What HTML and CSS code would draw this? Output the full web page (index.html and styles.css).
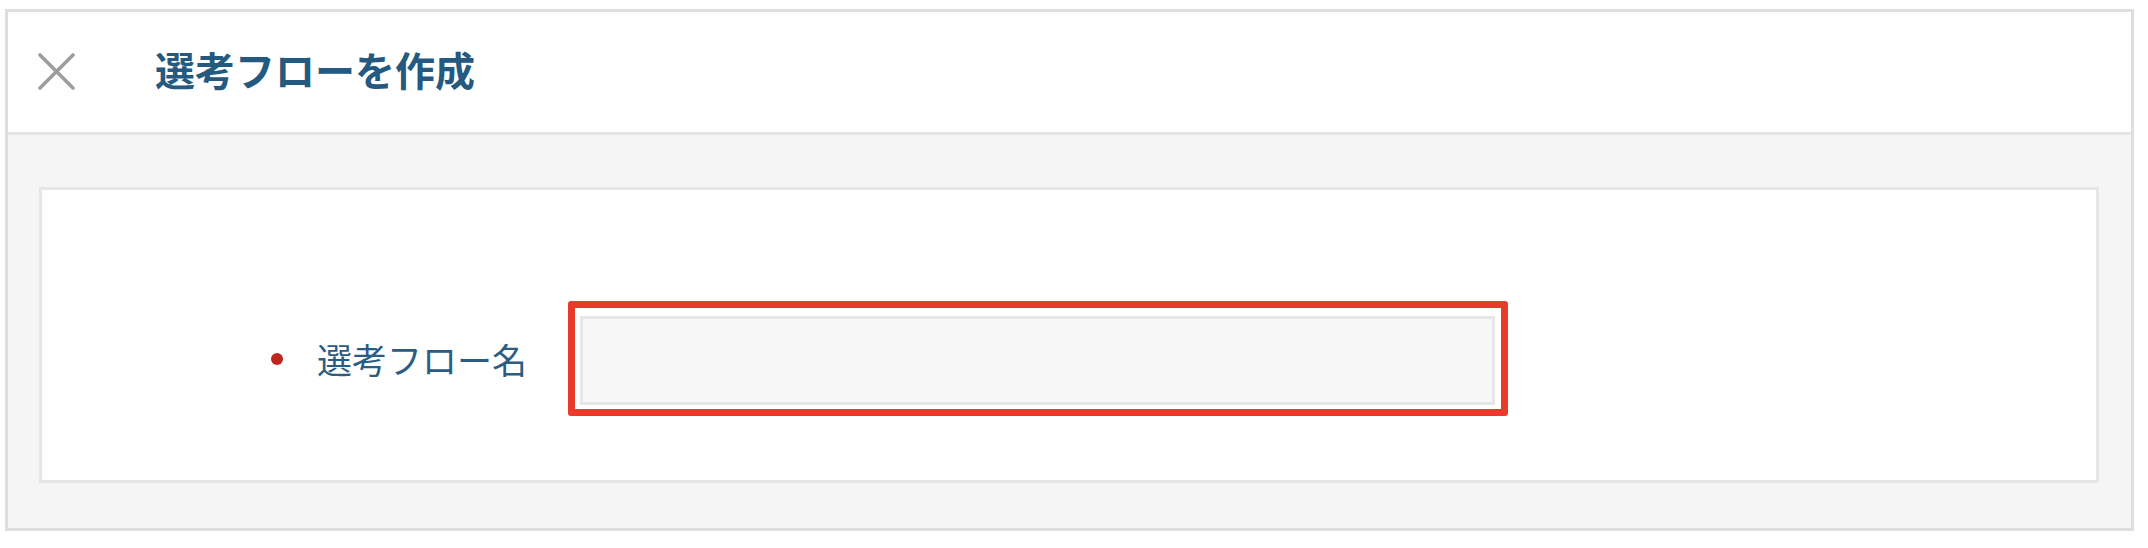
FILE: index.html
```html
<!DOCTYPE html>
<html lang="ja">
<head>
<meta charset="utf-8">
<title>選考フローを作成</title>
<link rel="stylesheet" href="styles.css">
</head>
<body>
<div class="modal">
  <div class="modal-header">
    <button class="close-btn" type="button" aria-label="閉じる">
      <svg width="37" height="37" viewBox="0 0 37 37"><path d="M2 2 L35 35 M35 2 L2 35" stroke="#9d9d9d" stroke-width="3.6" stroke-linecap="round" fill="none"/></svg>
    </button>
    <h1 class="modal-title">選考フローを作成</h1>
  </div>
  <div class="modal-body">
    <div class="form-card">
      <div class="form-row">
        <span class="required-dot"></span>
        <label class="form-label" for="flow-name">選考フロー名</label>
        <div class="highlight">
          <input class="text-input" id="flow-name" type="text">
        </div>
      </div>
    </div>
  </div>
</div>
</body>
</html>
```
FILE: styles.css
```css
html, body {
  margin: 0;
  padding: 0;
  background: #ffffff;
}
body {
  font-family: "Noto Sans CJK JP", "Noto Sans", sans-serif;
}
.modal {
  margin: 9px 14px 0 5px;
  border: 3px solid #dedede;
}
.modal-header {
  height: 123px;
  box-sizing: border-box;
  padding: 0 0 6px 30px;
  display: flex;
  align-items: center;
  background: #ffffff;
  border-bottom: 3px solid #e5e5e5;
}
.close-btn {
  width: 37px;
  height: 37px;
  padding: 0;
  margin: 4px 80px 0 0;
  border: 0;
  background: none;
  display: flex;
}
.modal-title {
  margin: 0;
  font-size: 40px;
  line-height: 1;
  font-weight: 700;
  color: #245a80;
}
.modal-body {
  background: #f5f5f5;
  padding: 52px 32px 45px 31px;
}
.form-card {
  background: #ffffff;
  border: 3px solid #e6e6e6;
  box-sizing: border-box;
  height: 296px;
  padding: 111px 0 0 229px;
}
.form-row {
  display: flex;
  align-items: center;
}
.required-dot {
  width: 12px;
  height: 12px;
  border-radius: 50%;
  background: #c0251d;
  margin-right: 34px;
  flex: none;
}
.form-label {
  font-size: 35px;
  line-height: 1;
  color: #2c5c83;
  margin-right: 41px;
}
.highlight {
  border: 7px solid #ea3a2c;
  border-radius: 3px;
  padding: 8px 6px 4px 5px;
}
.text-input {
  display: block;
  width: 915px;
  height: 89px;
  box-sizing: border-box;
  margin: 0;
  border: 3px solid #e6e6e6;
  background: #f7f7f7;
  outline: none;
}
```
